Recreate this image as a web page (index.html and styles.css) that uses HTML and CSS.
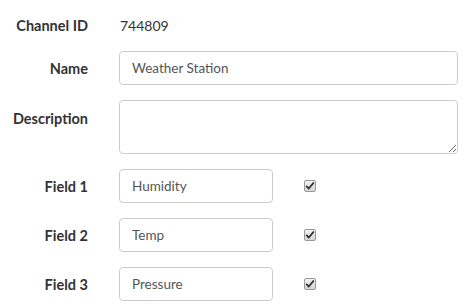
FILE: index.html
```html
<!DOCTYPE html>
<html>
<head>
<meta charset="utf-8">
<link rel="stylesheet" href="styles.css">
</head>
<body>
<form class="form">
  <div class="row row-static">
    <label class="label">Channel ID</label>
    <div class="value">744809</div>
  </div>
  <div class="row">
    <label class="label">Name</label>
    <input class="input input-wide" type="text" value="Weather Station">
  </div>
  <div class="row row-top">
    <label class="label label-top">Description</label>
    <textarea class="textarea"></textarea>
  </div>
  <div class="row">
    <label class="label">Field 1</label>
    <input class="input input-field" type="text" value="Humidity">
    <span class="check"><svg viewBox="0 0 12 12" width="10" height="10"><path d="M2 6.5 L4.5 9 L10 2.5" fill="none" stroke="#333" stroke-width="2.2" stroke-linecap="round" stroke-linejoin="round"/></svg></span>
  </div>
  <div class="row">
    <label class="label">Field 2</label>
    <input class="input input-field" type="text" value="Temp">
    <span class="check"><svg viewBox="0 0 12 12" width="10" height="10"><path d="M2 6.5 L4.5 9 L10 2.5" fill="none" stroke="#333" stroke-width="2.2" stroke-linecap="round" stroke-linejoin="round"/></svg></span>
  </div>
  <div class="row">
    <label class="label">Field 3</label>
    <input class="input input-field" type="text" value="Pressure">
    <span class="check"><svg viewBox="0 0 12 12" width="10" height="10"><path d="M2 6.5 L4.5 9 L10 2.5" fill="none" stroke="#333" stroke-width="2.2" stroke-linecap="round" stroke-linejoin="round"/></svg></span>
  </div>
</form>
</body>
</html>
```
FILE: styles.css
```css
* { box-sizing: border-box; }
body {
  margin: 0;
  background: #fff;
  font-family: "Lato", "Liberation Sans", sans-serif;
  color: #333;
}
.form {
  display: flex;
  flex-direction: column;
  gap: 15px;
  padding-top: 14px;
}
.row {
  display: flex;
  align-items: center;
}
.row-top { align-items: flex-start; }
.row-static { height: 22px; }
.label {
  width: 88px;
  flex: none;
  text-align: right;
  font-weight: bold;
  font-size: 14.5px;
  color: #333;
  margin-right: 31px;
}
.label-top { padding-top: 10px; }
.value {
  font-size: 14px;
  color: #333;
  padding-left: 1px;
}
.input, .textarea {
  font-family: inherit;
  font-size: 13.5px;
  color: #555;
  border: 1px solid #ccc;
  border-radius: 4px;
  background: #fff;
  padding: 0 12px;
  outline: none;
}
.input { height: 34px; }
.input-wide { width: 339px; }
.input-field { width: 154px; }
.textarea {
  width: 339px;
  height: 54px;
  resize: vertical;
  margin: 0;
}
.check {
  margin-left: 31px;
  width: 12px;
  height: 12px;
  border: 1px solid #999;
  border-radius: 2px;
  background: linear-gradient(#f2f2f2, #d6d6d6);
  display: flex;
  align-items: center;
  justify-content: center;
}
.check svg { display: block; }
```
